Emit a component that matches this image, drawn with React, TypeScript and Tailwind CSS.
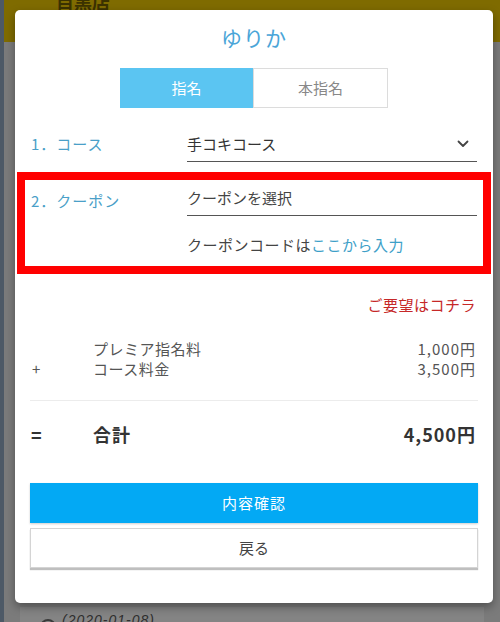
import React from "react"

const jp = "font-['Noto_Sans_CJK_JP','Noto_Sans',sans-serif]"

function Chevron() {
  return (
    <svg width="12" height="8" viewBox="0 0 12 8" fill="none">
      <path d="M1.5 1.5 L6 6 L10.5 1.5" stroke="#444" strokeWidth="1.8" strokeLinecap="round" strokeLinejoin="round" />
    </svg>
  )
}

// 背景ページ(オーバーレイで暗くなっている)
function BackgroundPage() {
  return (
    <div className="flex h-full w-full">
      <div className="w-[4px] shrink-0 bg-[#4d5966]" />
      <div className="flex flex-1 flex-col">
        <div className={`h-[42px] shrink-0 bg-[#7f6b00] pl-[52px] ${jp}`}>
          <span className="relative top-[-12px] text-[18px] font-bold text-[#3b3200]">目黒店</span>
        </div>
        <div className="flex-1 bg-[#7b7b7b]">
          <div className="mx-[16px] mt-[565px] flex h-[40px] shrink-0 items-start gap-[6px] bg-[#848484] pl-[20px] pt-[3px]">
            <span className="mt-[9px] h-[16px] w-[16px] rounded-full border-2 border-[#3a3a3a]" />
            <span className="text-[14px] italic tracking-[1px] text-[#2e2e2e] font-['Liberation_Sans',sans-serif]">(2020-01-08)</span>
          </div>
        </div>
      </div>
    </div>
  )
}

function Modal() {
  return (
    <div className={`absolute left-[15px] top-[10px] h-[593px] w-[478px] rounded-[5px] bg-white px-[15px] shadow-[0_4px_10px_rgba(0,0,0,0.35)] ${jp}`}>
      <h2 className="pt-[13px] text-center text-[21px] leading-[28px] tracking-[1px] text-[#4aa5d8]">ゆりか</h2>

      {/* 指名切り替え */}
      <div className="mt-[17px] flex justify-center">
        <div className="flex h-[40px] w-[268px]">
          <div className="flex flex-1 items-center justify-center bg-[#5bc5f2] text-[15px] text-white">指名</div>
          <div className="flex flex-1 items-center justify-center border border-[#dcdcdc] text-[15px] text-[#888]">本指名</div>
        </div>
      </div>

      {/* 1. コース */}
      <div className="mt-[19px] flex px-[1px]">
        <div className="w-[156px] pt-[7px] text-[15px] leading-[20px] tracking-[1px] text-[#4a9fc8]">1．コース</div>
        <div className="flex h-[35px] flex-1 items-center justify-between border-b border-[#555] pr-[8px]">
          <span className="text-[15px] leading-[20px] text-[#333]">手コキコース</span>
          <Chevron />
        </div>
      </div>

      {/* 2. クーポン(赤枠) */}
      <div className="mx-[-13px] mt-[10px] border-[8px] border-[#f00] px-[6px] pb-[11px] pt-[8px]">
        <div className="flex">
          <div className="w-[156px] pt-[3px] text-[15px] leading-[20px] tracking-[1px] text-[#4a9fc8]">2．クーポン</div>
          <div className="flex-1">
            <div className="h-[28px] border-b border-[#555] text-[15px] leading-[20px] text-[#444]">クーポンを選択</div>
            <div className="mt-[19px] text-[15px] leading-[20px] tracking-[0.5px] text-[#444]">
              クーポンコードは<span className="text-[#3ea0c8]">ここから入力</span>
            </div>
          </div>
        </div>
      </div>

      <div className="mt-[21px] pr-[2px] text-right text-[15px] leading-[20px] tracking-[0.5px] text-[#c62828]">ご要望はコチラ</div>

      {/* 料金 */}
      <div className="mt-[24px] text-[15px] leading-[20px] text-[#555]">
        <div className="flex">
          <span className="w-[63px]" />
          <span className="flex-1 tracking-[0.5px]">プレミア指名料</span>
          <span className="pr-[2px] tracking-[1px]">1,000円</span>
        </div>
        <div className="flex">
          <span className="w-[63px] pl-[2px]">+</span>
          <span className="flex-1 tracking-[0.5px]">コース料金</span>
          <span className="pr-[2px] tracking-[1px]">3,500円</span>
        </div>
      </div>

      <div className="mt-[21px] border-t border-[#ececec]" />

      <div className="mt-[21px] flex items-center text-[18px] font-bold leading-[24px] text-[#333]">
        <span className="w-[63px] pl-[1px]">=</span>
        <span className="flex-1 tracking-[1px]">合計</span>
        <span className="pr-[2px] tracking-[1px]">4,500円</span>
      </div>

      {/* ボタン */}
      <div className="mt-[37px] flex flex-col gap-[5px]">
        <button className="h-[40px] w-full bg-[#03a9f4] text-[15px] tracking-[1px] text-white shadow-[0_1px_2px_rgba(0,0,0,0.2)]">内容確認</button>
        <button className="h-[40px] w-full border border-[#d4d4d4] bg-white text-[15px] text-[#444] shadow-[0_2px_1px_rgba(0,0,0,0.25)]">戻る</button>
      </div>
    </div>
  )
}

export default function App() {
  return (
    <div className="relative h-[622px] w-[500px] overflow-hidden">
      <BackgroundPage />
      <Modal />
    </div>
  )
}
